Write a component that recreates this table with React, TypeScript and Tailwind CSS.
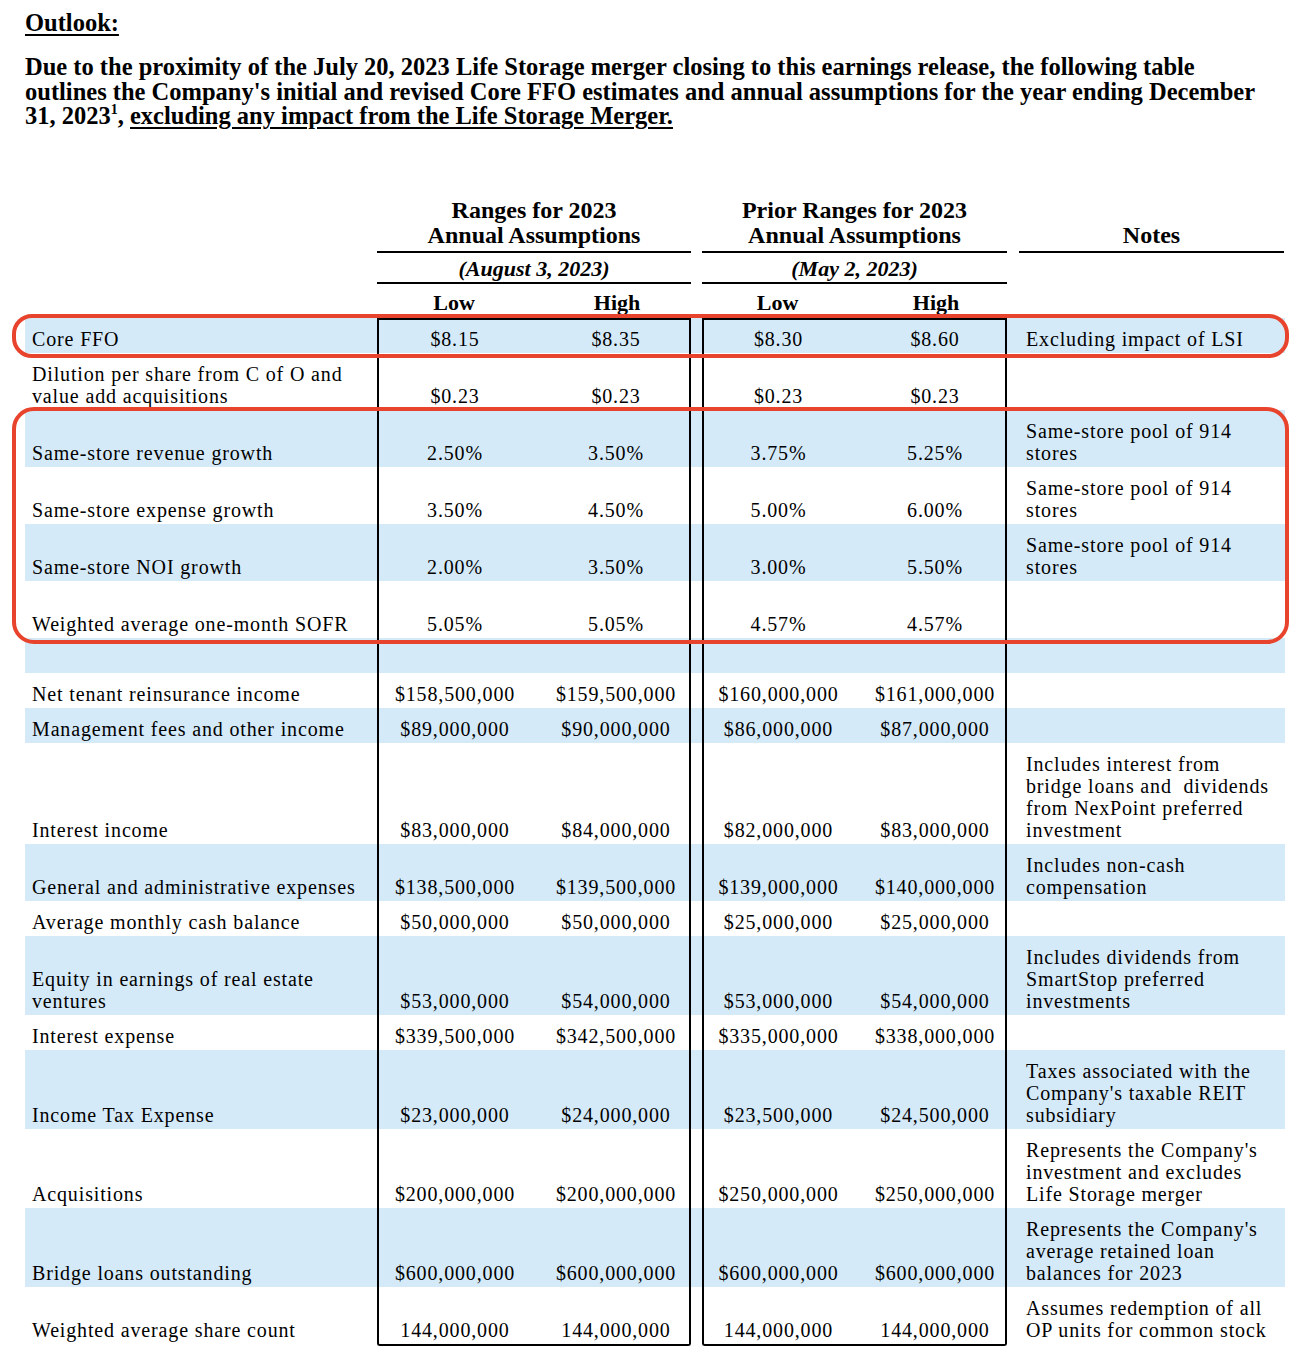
import React from "react";

type Row = {
  label: string[];
  v: [string, string, string, string];
  notes?: string[];
  blue: boolean;
  empty?: boolean;
  tall?: boolean;
};

const BLUE = "bg-[#d5eaf9]";

const rowsA: Row[] = [
  { label: ["Core FFO"], v: ["$8.15", "$8.35", "$8.30", "$8.60"], notes: ["Excluding impact of LSI"], blue: true },
  {
    label: ["Dilution per share from C of O and", "value add acquisitions"],
    v: ["$0.23", "$0.23", "$0.23", "$0.23"],
    blue: false,
  },
];

const rowsB: Row[] = [
  { label: ["Same-store revenue growth"], v: ["2.50%", "3.50%", "3.75%", "5.25%"], notes: ["Same-store pool of 914", "stores"], blue: true },
  { label: ["Same-store expense growth"], v: ["3.50%", "4.50%", "5.00%", "6.00%"], notes: ["Same-store pool of 914", "stores"], blue: false },
  { label: ["Same-store NOI growth"], v: ["2.00%", "3.50%", "3.00%", "5.50%"], notes: ["Same-store pool of 914", "stores"], blue: true },
  { label: ["Weighted average one-month SOFR"], v: ["5.05%", "5.05%", "4.57%", "4.57%"], blue: false, tall: true },
];

const rowsC: Row[] = [
  { label: [""], v: ["", "", "", ""], blue: true, empty: true },
  { label: ["Net tenant reinsurance income"], v: ["$158,500,000", "$159,500,000", "$160,000,000", "$161,000,000"], blue: false },
  { label: ["Management fees and other income"], v: ["$89,000,000", "$90,000,000", "$86,000,000", "$87,000,000"], blue: true },
  {
    label: ["Interest income"],
    v: ["$83,000,000", "$84,000,000", "$82,000,000", "$83,000,000"],
    notes: ["Includes interest from", "bridge loans and  dividends", "from NexPoint preferred", "investment"],
    blue: false,
  },
  {
    label: ["General and administrative expenses"],
    v: ["$138,500,000", "$139,500,000", "$139,000,000", "$140,000,000"],
    notes: ["Includes non-cash", "compensation"],
    blue: true,
  },
  { label: ["Average monthly cash balance"], v: ["$50,000,000", "$50,000,000", "$25,000,000", "$25,000,000"], blue: false },
  {
    label: ["Equity in earnings of real estate", "ventures"],
    v: ["$53,000,000", "$54,000,000", "$53,000,000", "$54,000,000"],
    notes: ["Includes dividends from", "SmartStop preferred", "investments"],
    blue: true,
  },
  { label: ["Interest expense"], v: ["$339,500,000", "$342,500,000", "$335,000,000", "$338,000,000"], blue: false },
  {
    label: ["Income Tax Expense"],
    v: ["$23,000,000", "$24,000,000", "$23,500,000", "$24,500,000"],
    notes: ["Taxes associated with the", "Company's taxable REIT", "subsidiary"],
    blue: true,
  },
  {
    label: ["Acquisitions"],
    v: ["$200,000,000", "$200,000,000", "$250,000,000", "$250,000,000"],
    notes: ["Represents the Company's", "investment and excludes", "Life Storage merger"],
    blue: false,
  },
  {
    label: ["Bridge loans outstanding"],
    v: ["$600,000,000", "$600,000,000", "$600,000,000", "$600,000,000"],
    notes: ["Represents the Company's", "average retained loan", "balances for 2023"],
    blue: true,
  },
  {
    label: ["Weighted average share count"],
    v: ["144,000,000", "144,000,000", "144,000,000", "144,000,000"],
    notes: ["Assumes redemption of all", "OP units for common stock"],
    blue: false,
  },
];

function Lines({ lines }: { lines: string[] }) {
  return (
    <>
      {lines.map((l, i) => (
        <div key={i} className="whitespace-pre h-[22px] leading-[22px]">
          {l}
        </div>
      ))}
    </>
  );
}

function TableRow({ row, first, last }: { row: Row; first?: boolean; last?: boolean }) {
  const pt = first ? "pt-[8px]" : "pt-[10px]";
  const pbOther = last ? "pb-[5px]" : "pb-[3px]";
  const cell = `flex flex-col justify-end ${pt}`;
  const boxTop = first ? "border-t-2 border-t-black" : "";
  const boxBottom = last ? "border-b-2 border-b-black" : "";
  const minH = row.empty ? "min-h-[35px]" : row.tall ? "min-h-[57px]" : "";
  return (
    <div className={`flex ${row.blue ? BLUE : "bg-white"} ${minH}`}>
      <div className={`${cell} ${pbOther} w-[352px] pl-[7px]`}>
        <Lines lines={row.label} />
      </div>
      <div className={`${cell} pb-[3px] w-[154px] border-l-2 border-l-black text-center ${boxTop} ${boxBottom} ${last ? "rounded-bl-[3px]" : ""}`}>
        {!row.empty && <div className="h-[22px] leading-[22px]">{row.v[0]}</div>}
      </div>
      <div className={`${cell} pb-[3px] w-[160px] pl-[12px] border-r-2 border-r-black text-center ${boxTop} ${boxBottom} ${last ? "rounded-br-[3px]" : ""}`}>
        {!row.empty && <div className="h-[22px] leading-[22px]">{row.v[1]}</div>}
      </div>
      <div className={`${cell} ${pbOther} w-[11px]`} />
      <div className={`${cell} pb-[3px] w-[151px] border-l-2 border-l-black text-center ${boxTop} ${boxBottom} ${last ? "rounded-bl-[3px]" : ""}`}>
        {!row.empty && <div className="h-[22px] leading-[22px]">{row.v[2]}</div>}
      </div>
      <div className={`${cell} pb-[3px] w-[154px] pl-[12px] border-r-2 border-r-black text-center ${boxTop} ${boxBottom} ${last ? "rounded-br-[3px]" : ""}`}>
        {!row.empty && <div className="h-[22px] leading-[22px]">{row.v[3]}</div>}
      </div>
      <div className={`${cell} ${pbOther} w-[278px] pl-[19px]`}>
        {row.notes && <Lines lines={row.notes} />}
      </div>
    </div>
  );
}

export default function App() {
  return (
    <div
      className="bg-white text-black min-h-[1362px] w-[1312px] pl-[25px] pt-[10px]"
      style={{ fontFamily: '"Liberation Serif", "Times New Roman", serif' }}
    >
      <div className="text-[24.5px] leading-[25px] font-bold">
        <span className="underline decoration-[1.5px] underline-offset-[3px]">Outlook:</span>
      </div>
      <div className="mt-[20px] text-[24.5px] leading-[24.5px] font-bold whitespace-nowrap">
        <div>
          Due to the proximity of the July 20, 2023 Life Storage merger closing to this earnings release, the following table
        </div>
        <div>
          outlines the Company's initial and revised Core FFO estimates and annual assumptions for the year ending December
        </div>
        <div>
          31, 2023<sup className="text-[14px] top-[-0.7em]">1</sup>,{" "}
          <span className="underline decoration-[1.5px] underline-offset-[3px]">
            excluding any impact from the Life Storage Merger.
          </span>
        </div>
      </div>

      {/* Table header */}
      <div className="mt-[69px] w-[1260px] font-bold">
        <div className="flex items-end">
          <div className="w-[352px]" />
          <div className="w-[314px] text-center text-[24px] leading-[25px] pb-[3px] border-b-2 border-black">
            <div>Ranges for 2023</div>
            <div>Annual Assumptions</div>
          </div>
          <div className="w-[11px]" />
          <div className="w-[305px] text-center text-[24px] leading-[25px] pb-[3px] border-b-2 border-black">
            <div>Prior Ranges for 2023</div>
            <div>Annual Assumptions</div>
          </div>
          <div className="w-[278px] pl-[12px] pr-[1px]">
            <div className="text-center text-[24px] leading-[25px] pb-[3px] border-b-2 border-black">Notes</div>
          </div>
        </div>
        <div className="flex italic text-[22px] leading-[25px]">
          <div className="w-[352px]" />
          <div className="w-[314px] text-center pt-[3px] pb-[1px] border-b-2 border-black">(August 3, 2023)</div>
          <div className="w-[11px]" />
          <div className="w-[305px] text-center pt-[3px] pb-[1px] border-b-2 border-black">(May 2, 2023)</div>
          <div className="w-[278px]" />
        </div>
        <div className="flex text-[22px] leading-[25px] pt-[6px] pb-[3px]">
          <div className="w-[352px]" />
          <div className="w-[154px] text-center">Low</div>
          <div className="w-[160px] pl-[12px] text-center">High</div>
          <div className="w-[11px]" />
          <div className="w-[151px] text-center">Low</div>
          <div className="w-[154px] pl-[12px] text-center">High</div>
          <div className="w-[278px]" />
        </div>
      </div>

      {/* Table body */}
      <div className="w-[1260px] text-[20px] leading-[22px] tracking-[0.85px]">
        <div className="relative">
          <TableRow row={rowsA[0]} first />
          <div className="pointer-events-none absolute left-[-13px] right-[-4px] top-[-4px] bottom-[-5px] rounded-[20px] border-[4px] border-[#e8432c] z-10" />
        </div>
        <TableRow row={rowsA[1]} />
        <div className="relative">
          {rowsB.map((r, i) => (
            <TableRow key={i} row={r} />
          ))}
          <div className="pointer-events-none absolute left-[-13px] right-[-4px] top-[-3px] bottom-[-6px] rounded-[22px] border-[4px] border-[#e8432c] z-10" />
        </div>
        {rowsC.map((r, i) => (
          <TableRow key={i} row={r} last={i === rowsC.length - 1} />
        ))}
      </div>
    </div>
  );
}
